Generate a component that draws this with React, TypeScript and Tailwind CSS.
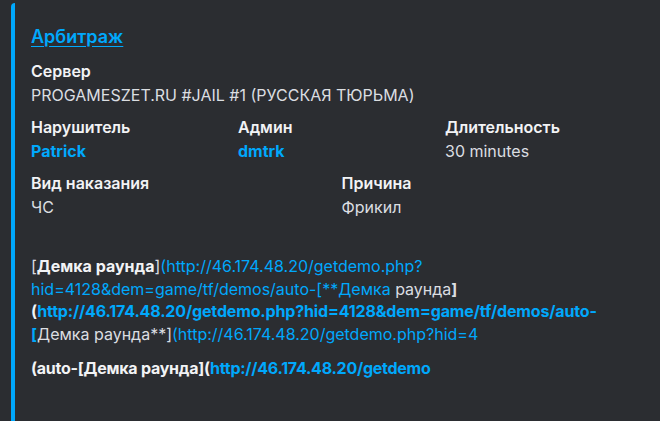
const fontStack = { fontFamily: 'Inter, "Noto Sans", sans-serif' };

interface Field {
  name: string;
  value: string;
  link?: boolean;
  span: string;
}

const rows: Field[][] = [
  [{ name: 'Сервер', value: 'PROGAMESZET.RU #JAIL #1 (РУССКАЯ ТЮРЬМА)', span: 'col-span-12' }],
  [
    { name: 'Нарушитель', value: 'Patrick', link: true, span: 'col-span-4' },
    { name: 'Админ', value: 'dmtrk', link: true, span: 'col-span-4' },
    { name: 'Длительность', value: '30 minutes', span: 'col-span-4' },
  ],
  [
    { name: 'Вид наказания', value: 'ЧС', span: 'col-span-6' },
    { name: 'Причина', value: 'Фрикил', span: 'col-span-6' },
  ],
];

function EmbedField({ f }: { f: Field }) {
  return (
    <div className={`${f.span} min-w-0`}>
      <div className="text-[16px] leading-[24px] font-semibold text-[#f2f3f5]">{f.name}</div>
      {f.link ? (
        <div className="text-[16px] leading-[24px] font-bold text-[#00a8fc]">{f.value}</div>
      ) : (
        <div className="text-[16px] leading-[24px] text-[#dbdee1]">{f.value}</div>
      )}
    </div>
  );
}

export default function App() {
  return (
    <div className="w-[660px] h-[421px] bg-[#2b2d31] overflow-hidden pt-[3px] pl-[11px]" style={fontStack}>
      <div className="h-[430px] border-l-4 border-[#00a8fc] rounded-tl-[4px] bg-[#2b2d31] pl-4 pr-4 pt-[21px]">
        <a className="block text-[18px] leading-[26px] font-semibold text-[#00a8fc] underline underline-offset-[3px]">
          Арбитраж
        </a>

        <div className="mt-[9px] flex flex-col gap-[8px] w-[613px]">
          {rows.map((r, i) => (
            <div key={i} className="grid grid-cols-12 gap-x-2">
              {r.map(f => <EmbedField key={f.name} f={f} />)}
            </div>
          ))}
        </div>

        {/* description, rendered markdown soup */}
        <div className="mt-[36px] text-[16px] leading-[22.5px] text-[#dbdee1] whitespace-nowrap">
          <div>
            [<b className="font-bold text-[#f2f3f5]">Демка раунда</b>]
            <span className="text-[#00a8fc]">(http://46.174.48.20/getdemo.php?</span>
          </div>
          <div>
            <span className="text-[#00a8fc]">hid=4128&amp;dem=game/tf/demos/auto-[**Демка</span> раунда<b className="font-bold">]</b>
          </div>
          <div className="font-bold tracking-[-0.15px]">
            <span className="text-[#f2f3f5]">(</span>
            <span className="text-[#00a8fc]">http://46.174.48.20/getdemo.php?hid=4128&amp;dem=game/tf/demos/auto-</span>
          </div>
          <div>
            <b className="font-bold text-[#00a8fc]">[</b>Демка раунда**]
            <span className="text-[#00a8fc]">(http://46.174.48.20/getdemo.php?hid=4</span>
          </div>
          <div className="mt-[12px] font-bold tracking-[-0.25px] text-[#f2f3f5]">
            (auto-[Демка раунда](<span className="text-[#00a8fc]">http://46.174.48.20/getdemo</span>
          </div>
        </div>
      </div>
    </div>
  );
}
